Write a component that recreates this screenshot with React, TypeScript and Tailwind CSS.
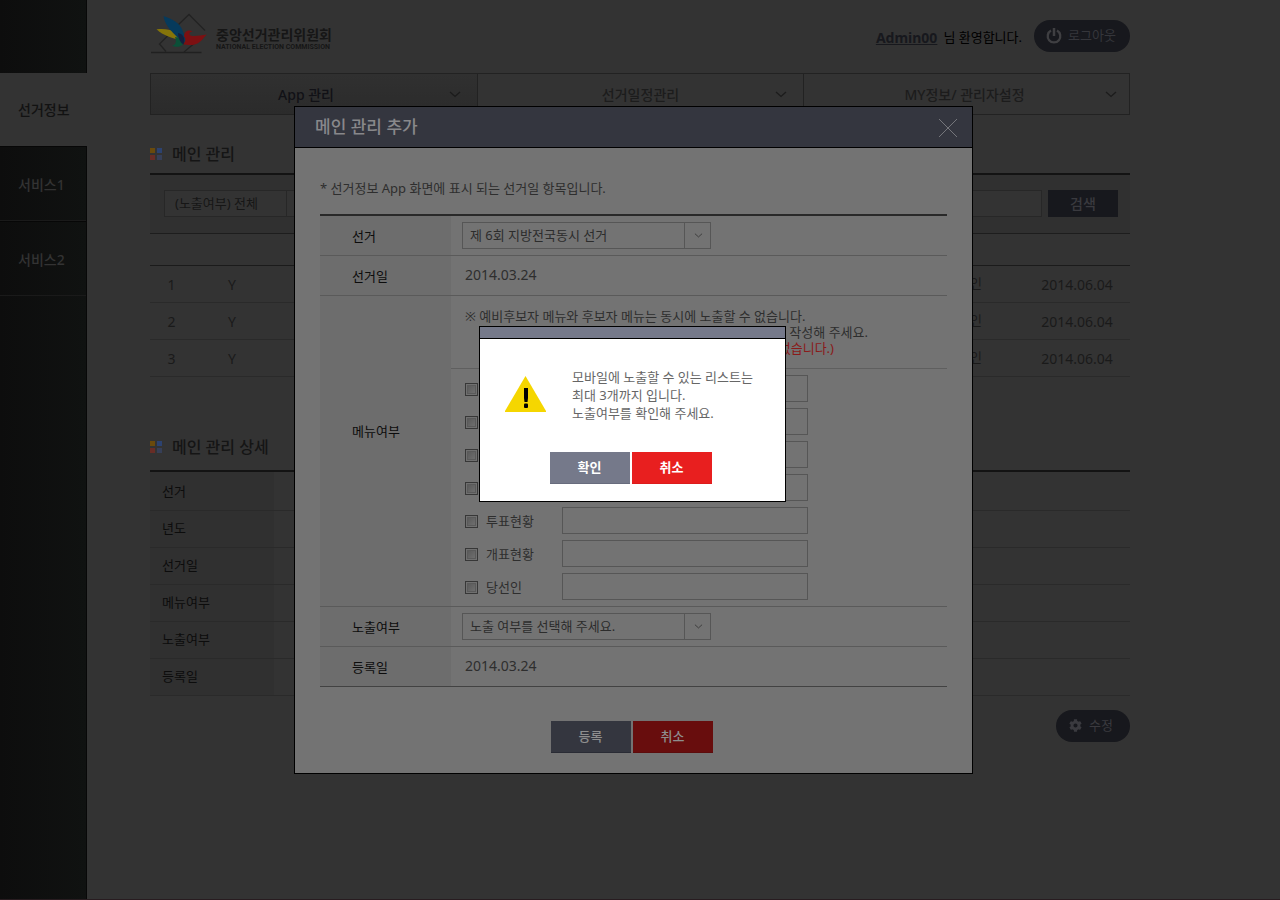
import { FaCog } from "react-icons/fa";

const services = ["서비스1", "서비스2"];
const listRows = [1, 2, 3];
const detailLabels = ["선거", "년도", "선거일", "메뉴여부", "노출여부", "등록일"];
const menus = ["예비후보자", "후보자", "투표소", "정책공약", "투표현황", "개표현황", "당선인"];

function Chevron({ className }: { className: string }) {
  return (
    <svg viewBox="0 0 12 7" className={className} fill="none" stroke="currentColor" aria-hidden="true">
      <path d="M1 1 L6 5.5 L11 1" strokeWidth="1.3" />
    </svg>
  );
}

function Logo() {
  return (
    <a href="#" className="flex items-start gap-2">
      <svg viewBox="150 12 58 42" className="h-[42px] w-[58px]" fill="none" aria-hidden="true">
        <path d="M178 25 L189 14.5 L205 30.5 M203 36 L184 52 M166 51.5 L159.500 44 L169 34.500" stroke="#222" strokeWidth="1.300" />
        <path d="M151 52.500 H201.500" stroke="#202020" strokeWidth="1.600" />
        <path d="M156.500 29.300 C163 28.500 171 29 178 33 L182 40 C173 39 163 35.500 156.500 29.300 Z" fill="#85740a" />
        <path d="M163.500 16 C172 19 181 23 183 32 C186 37 186 42 182 45 C180 36 166 31 163.500 16 Z" fill="#063a5c" />
        <path d="M175 37 C179 37 183 40 183.500 44 C180 47.500 175 47.500 172 45.500 C175.500 45 177 42 175 37 Z" fill="#0b5038" />
        <path d="M184 36.500 C184 31 188.500 29 193 31.500 C189.500 31.500 188.500 34 190.500 35.500 C195 37 201 35 206.700 34.500 C203 38.500 200 43.500 194 44.700 C189.500 45.500 186 44.500 183 44.500 C185.500 42 186.500 39 184 36.500 Z" fill="#7c1012" />
        <path d="M178 33 C183 34 185.500 38 183.500 44.500 C180.500 43 178.500 39 178 33 Z" fill="#14203f" />
      </svg>
      <span className="flex flex-col pt-[14px] text-[#161616]">
        <span className="text-[14px] leading-[17px] font-bold">중앙선거관리위원회</span>
        <span className="font-[Roboto,sans-serif] text-[7px] leading-[8px] font-bold whitespace-nowrap">NATIONAL ELECTION COMMISSION</span>
      </span>
    </a>
  );
}

function SectionTitle({ children }: { children: string }) {
  return (
    <h2 className="flex items-center gap-[10px] text-[16px] leading-6 font-medium text-[#151515]">
      <span className="grid grid-cols-2 gap-[2px]" aria-hidden="true">
        <i className="size-[5px] bg-[#6a4a0c]" />
        <i className="size-[5px] bg-[#2c4270]" />
        <i className="size-[5px] bg-[#682d26]" />
        <i className="size-[5px] bg-[#363f58]" />
      </span>
      {children}
    </h2>
  );
}

function FormSelect({ id, text }: { id: string; text: string }) {
  return (
    <div className="relative ml-[11px] h-[27px] w-[249px]">
      <select
        id={id}
        className="size-full appearance-none border border-[#565656] bg-transparent pb-px pl-[7px] text-[13px] text-[#2c2c2c] outline-none"
      >
        <option>{text}</option>
      </select>
      <span className="pointer-events-none absolute inset-y-0 right-0 flex w-[27px] items-center justify-center border-l border-[#565656] text-[#3a3a3a]">
        <Chevron className="h-[5px] w-[9px]" />
      </span>
    </div>
  );
}

const thClass = "w-[131px] bg-[#6d6d6d] pt-px pl-8 text-left font-normal text-[#0c0c0c]";

function MainModal() {
  return (
    <div className="fixed inset-0 flex items-start justify-center pt-[106px] pr-[13px]">
      <section role="dialog" aria-labelledby="modal-title" className="w-[679px] border border-black bg-[#737373]">
        <header className="flex h-[41px] items-center justify-between border-b border-black bg-[#34363f] pr-[14px] pl-5">
          <h2 id="modal-title" className="text-[17px] font-medium text-[#88888b]">메인 관리 추가</h2>
          <button type="button" aria-label="닫기" className="pt-px text-[#75767b]">
            <svg viewBox="0 0 20 20" className="size-5" stroke="currentColor" aria-hidden="true">
              <path d="M1 1 L19 19 M19 1 L1 19" />
            </svg>
          </button>
        </header>
        <form className="px-[25px] pt-[30px] pb-5 text-[13px] leading-5 text-[#2e2e2e]">
          <p className="mb-4">* 선거정보 App 화면에 표시 되는 선거일 항목입니다.</p>
          <table className="w-full border-collapse border-t-2 border-b border-t-[#292929] border-b-[#424242]">
            <tbody className="[&>tr]:border-b [&>tr]:border-[#5a5a5a] [&>tr:last-child]:border-[#424242]">
              <tr className="h-10">
                <th scope="row" className={thClass}><label htmlFor="election">선거</label></th>
                <td><FormSelect id="election" text="제 6회 지방전국동시 선거" /></td>
              </tr>
              <tr className="h-10">
                <th scope="row" className={thClass}>선거일</th>
                <td className="pl-[14px] text-[14px]">2014.03.24</td>
              </tr>
              <tr>
                <th scope="row" className="w-[131px] bg-[#6d6d6d] pb-10 pl-8 text-left font-normal text-[#0c0c0c]">메뉴여부</th>
                <td>
                  <div className="border-b border-[#5f5f5f] pt-3 pb-3 pl-[14px] leading-4">
                    <p>※ 예비후보자 메뉴와 후보자 메뉴는 동시에 노출할 수 없습니다.</p>
                    <p className="w-[403px] text-right">메뉴명을 변경하실 경우 오른쪽 입력란에 새 이름을 작성해 주세요.</p>
                    <p className="w-[369px] text-right text-[#8a1a1a]">(입력하지 않은 메뉴는 모바일에 노출할 수 없습니다.)</p>
                  </div>
                  <ul className="flex flex-col gap-[6px] py-[6px] pl-[14px]">
                    {menus.map((menu) => (
                      <li key={menu} className="flex h-[27px] items-center">
                        <label className="flex w-[97px] items-center gap-2 pt-[2px]">
                          <input
                            type="checkbox"
                            className="size-[13px] appearance-none border border-[#373737] bg-linear-to-br from-[#555] to-[#747474] shadow-[inset_0_0_0_1px_#707070,inset_0_0_0_2px_#5a5a5a]"
                          />
                          {menu}
                        </label>
                        <input type="text" aria-label={menu} className="h-[27px] w-[246px] border border-[#565656] px-2 outline-none" />
                      </li>
                    ))}
                  </ul>
                </td>
              </tr>
              <tr className="h-10">
                <th scope="row" className={thClass}><label htmlFor="exposure">노출여부</label></th>
                <td><FormSelect id="exposure" text="노출 여부를 선택해 주세요." /></td>
              </tr>
              <tr className="h-10">
                <th scope="row" className={thClass}>등록일</th>
                <td className="pl-[14px] text-[14px]">2014.03.24</td>
              </tr>
            </tbody>
          </table>
          <div className="mt-[34px] flex justify-center gap-[2px] pr-1 text-[13px] font-medium text-[#8e8e8e]">
            <button type="button" className="h-8 w-20 border-b border-[#292b34] bg-[#34363f]">등록</button>
            <button type="button" className="h-8 w-20 border-b border-[#5c0c0c] bg-[#680d0d]">취소</button>
          </div>
        </form>
      </section>
    </div>
  );
}

function AlertModal() {
  return (
    <div className="fixed inset-0 flex items-start justify-center pt-[326px] pr-[15px]">
      <section role="alertdialog" aria-describedby="alert-text" className="w-[307px] border border-black bg-white">
        <div className="h-3 border-b border-black bg-[#75798a]" />
        <div className="flex items-start gap-[26px] pt-[29px] pl-[25px]">
          <svg viewBox="0 0 41 36" className="mt-2 h-9 w-[41px]" aria-hidden="true">
            <path d="M20.500 0 L41 35 V36 H0 V35 Z" fill="#f5d600" />
            <path d="M19 12 H23 V22 L22.500 26 H19.500 L19 22 Z" />
            <rect x="19" y="27.500" width="4" height="4.500" rx="1" />
          </svg>
          <p id="alert-text" className="text-[13px] leading-[18px] text-[#666]">
            모바일에 노출할 수 있는 리스트는
            <br />
            최대 3개까지 입니다.
            <br />
            노출여부를 확인해 주세요.
          </p>
        </div>
        <div className="flex justify-center gap-[2px] pt-[30px] pr-1 pb-[17px] text-[13px] font-bold text-white">
          <button type="button" className="h-8 w-20 border-b border-[#686c7d] bg-[#75798a]">확인</button>
          <button type="button" className="h-8 w-20 border-b border-[#dc1c1c] bg-[#e81f1f]">취소</button>
        </div>
      </section>
    </div>
  );
}

export default function App() {
  return (
    <div className="flex min-h-screen border-b border-[#281c20] bg-[#333] font-['Noto_Sans','Noto_Sans_CJK_KR',sans-serif] text-[13px]">
      <aside className="w-[87px] shrink-0 border-r border-[#080808] bg-linear-to-r from-[#0d0d0d] to-[#101211] pt-[73px] text-[14px] font-medium">
        <nav>
          <a href="#" className="-mr-px flex h-[73px] items-center bg-[#333] pl-[18px] text-[#121212]">선거정보</a>
          {services.map((service) => (
            <a
              key={service}
              href="#"
              className="flex h-[75px] items-center border-t border-b border-t-[#070707] border-b-[#1a1a1a] pt-px pl-[18px] text-[#333]"
            >
              {service}
            </a>
          ))}
        </nav>
      </aside>

      <div className="min-w-0 flex-1 pr-[150px] pl-[63px]">
        <header className="flex h-[73px] items-start justify-between pt-3">
          <Logo />
          <div className="flex items-center pt-2">
            <p className="mr-3 flex items-center gap-[6px] pt-1 text-black">
              <a href="#" className="text-[14px] leading-4 font-bold text-[#17181d] underline">Admin00</a>
              <span>님 환영합니다.</span>
            </p>
            <button type="button" className="flex h-8 w-24 items-center gap-[6px] rounded-full bg-[#17181d] pl-3 text-[13px] text-[#35363b]">
              <svg viewBox="0 0 16 16" className="size-4" fill="none" stroke="#3f3f42" aria-hidden="true">
                <path d="M5 2.600 A6.300 6.300 0 1 0 11 2.600" strokeWidth="2.300" />
                <path d="M8 0 V8" strokeWidth="2.500" />
              </svg>
              로그아웃
            </button>
          </div>
        </header>

        <nav className="grid h-[42px] grid-cols-3 border border-[#222] text-[14px] font-medium text-[#1c1c1c]">
          <a href="#" className="relative flex items-center justify-center bg-linear-to-b from-[#303030] to-[#2b2b2b] pt-px pr-4 text-[#111116]">
            App 관리
            <Chevron className="absolute right-4 h-[7px] w-3 text-[#1b1b1b]" />
          </a>
          <a href="#" className="relative flex items-center justify-center border-l border-[#222] pt-px">
            선거일정관리
            <Chevron className="absolute right-4 h-[7px] w-3" />
          </a>
          <a href="#" className="relative flex items-center justify-center border-l border-[#222] pt-px pr-1">
            MY정보/ 관리자설정
            <Chevron className="absolute right-3 h-[7px] w-3" />
          </a>
        </nav>

        <main className="pt-[27px]">
          <section>
            <SectionTitle>메인 관리</SectionTitle>
            <form className="mt-[7px] flex items-center border-t-2 border-b border-t-[#131313] border-b-[#1d1d1d] bg-[#303030] pt-[15px] pr-3 pb-4 pl-[14px]">
              <div className="relative h-[27px] w-[150px]">
                <select
                  aria-label="노출여부"
                  className="size-full appearance-none border border-[#272727] bg-[#333] pl-[10px] text-[13px] text-[#161616] outline-none"
                >
                  <option>(노출여부) 전체</option>
                </select>
                <span className="pointer-events-none absolute inset-y-0 right-0 flex w-7 items-center justify-center border-l border-[#272727]">
                  <Chevron className="h-[5px] w-[9px]" />
                </span>
              </div>
              <input type="text" aria-label="검색어" className="mx-[6px] h-[27px] min-w-0 flex-1 border border-[#272727] bg-[#333] px-2 outline-none" />
              <button type="submit" className="h-[27px] w-[70px] bg-[#17181d] text-[14px] font-medium text-[#3a3a3f]">검색</button>
            </form>
            <table className="mt-[31px] w-full table-fixed border-collapse border-t border-[#1b1b1b] text-[#1a1a1a]">
              <tbody>
                {listRows.map((row) => (
                  <tr key={row} className="h-[37px] border-b border-[#2a2a2a] text-center text-[14px]">
                    <td className="w-[43px]">{row}</td>
                    <td className="w-[78px]">Y</td>
                    <td className="pr-[42px] text-right text-[13px]">당선인</td>
                    <td className="w-[106px]">2014.06.04</td>
                  </tr>
                ))}
              </tbody>
            </table>
          </section>

          <section className="pt-[58px]">
            <SectionTitle>메인 관리 상세</SectionTitle>
            <table className="mt-[11px] w-full border-collapse border-t-2 border-[#131313]">
              <tbody className="[&>tr:first-child]:h-[39px]">
                {detailLabels.map((label) => (
                  <tr key={label} className="h-[37px] border-b border-[#2a2a2a]">
                    <th scope="row" className="w-[124px] bg-[#303030] pt-px pl-3 text-left font-normal text-[#0c0c0c]">{label}</th>
                    <td />
                  </tr>
                ))}
              </tbody>
            </table>
            <div className="flex justify-end pt-[14px]">
              <button type="button" className="flex h-8 w-[74px] items-center gap-[7px] rounded-full bg-[#17181d] pl-[13px] text-[13px] text-[#3a3a3f]">
                <FaCog className="size-[13px]" aria-hidden="true" />
                수정
              </button>
            </div>
          </section>
        </main>
      </div>

      <MainModal />
      <AlertModal />
    </div>
  );
}
